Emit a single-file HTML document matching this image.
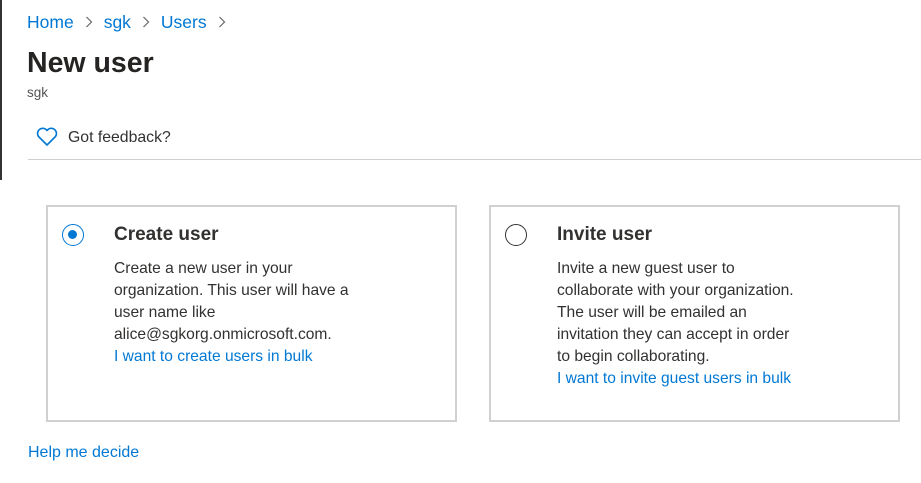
<!DOCTYPE html>
<html><head><style>
*{margin:0;padding:0;box-sizing:border-box}
body{width:921px;height:483px;background:#fff;font-family:"Liberation Sans",sans-serif;color:#323130;position:relative;overflow:hidden}
.a{position:absolute;white-space:nowrap}
.link{color:#0078d4}
.card{position:absolute;top:205px;width:411px;height:217px;border:2px solid #d0d0d0}
.radio{position:absolute;left:14px;top:17px;width:22px;height:22px;border-radius:50%}
.t{position:absolute;left:66px;top:17px;font-size:19px;font-weight:bold;color:#323130}
.b{position:absolute;left:66px;top:51px;font-size:15.6px;line-height:22px;color:#323130;white-space:nowrap}
.ch{display:inline-block;vertical-align:middle;margin:0 11px 3px}
</style></head><body>
<div class="a" style="left:0;top:0;width:2px;height:180px;background:#333"></div>
<div class="a" style="left:27px;top:12px;font-size:17.5px;color:#0078d4">Home<svg class="ch" width="8" height="12" viewBox="0 0 8 12"><path d="M1.5 1 L6.5 6 L1.5 11" fill="none" stroke="#666" stroke-width="1.2"/></svg>sgk<svg class="ch" width="8" height="12" viewBox="0 0 8 12"><path d="M1.5 1 L6.5 6 L1.5 11" fill="none" stroke="#666" stroke-width="1.2"/></svg>Users<svg class="ch" width="8" height="12" viewBox="0 0 8 12"><path d="M1.5 1 L6.5 6 L1.5 11" fill="none" stroke="#666" stroke-width="1.2"/></svg></div>
<div class="a" style="left:27px;top:47px;font-size:28.5px;font-weight:bold;color:#252423">New user</div>
<div class="a" style="left:27px;top:85px;font-size:13.5px;color:#555">sgk</div>
<svg class="a" style="left:36px;top:127px" width="22" height="20" viewBox="0 0 22 20"><path d="M11 18 L2.5 9.5 A4.8 4.8 0 0 1 11 3.5 A4.8 4.8 0 0 1 19.5 9.5 Z" fill="none" stroke="#0078d4" stroke-width="1.6" stroke-linejoin="round"/></svg>
<div class="a" style="left:68px;top:129px;font-size:15.8px;color:#323130">Got feedback?</div>
<div class="a" style="left:28px;top:159px;width:893px;height:1px;background:#cfcfcf"></div>
<div class="card" style="left:46px">
<div class="radio" style="border:1.5px solid #0078d4"><div style="position:absolute;left:5px;top:5px;width:9px;height:9px;border-radius:50%;background:#0078d4"></div></div>
<div class="t">Create user</div>
<div class="b">Create a new user in your<br>organization. This user will have a<br>user name like<br>alice@sgkorg.onmicrosoft.com.<br><span class="link">I want to create users in bulk</span></div>
</div>
<div class="card" style="left:489px">
<div class="radio" style="border:1.5px solid #333"></div>
<div class="t">Invite user</div>
<div class="b">Invite a new guest user to<br>collaborate with your organization.<br>The user will be emailed an<br>invitation they can accept in order<br>to begin collaborating.<br><span class="link">I want to invite guest users in bulk</span></div>
</div>
<div class="a link" style="left:28px;top:444px;font-size:16px">Help me decide</div>
</body></html>
